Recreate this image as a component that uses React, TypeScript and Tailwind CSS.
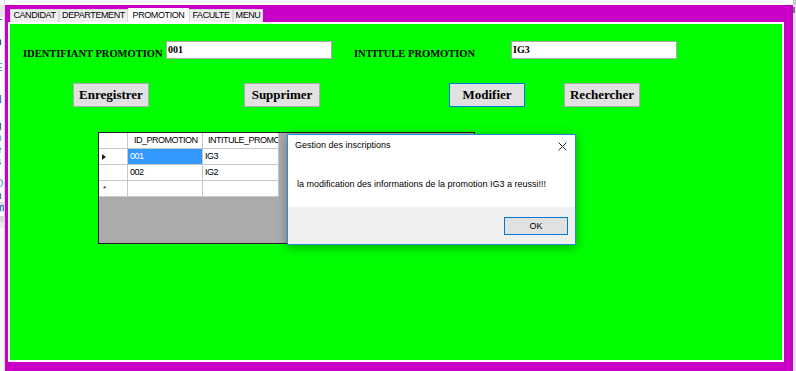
import React from "react";

const tabs = [
  { label: "CANDIDAT", w: "w-[49px]" },
  { label: "DEPARTEMENT", w: "w-[69px]" },
  { label: "PROMOTION", w: "w-[61px]", active: true },
  { label: "FACULTE", w: "w-[44px]" },
  { label: "MENU", w: "w-[30px]" },
];

const rows = [
  { id: "001", name: "IG3", current: true },
  { id: "002", name: "IG2" },
  { id: "", name: "", isNew: true },
];

function BackWindow() {
  // what shows of the window behind, on the left edge
  return (
    <div className="w-[5px] h-full overflow-hidden bg-white flex flex-col font-['Liberation_Sans',sans-serif] text-[10px] leading-[12px] border-r border-[#dcdcdc]">
      <div className="h-[5px] bg-white" />
      <div className="h-[12px] bg-[#e6e6e6]" />
      <div className="h-[14px] -ml-[4px] mt-[1px] text-[#333]">T</div>
      <div className="h-[26px] -ml-[4px] mt-[4px] text-black">n</div>
      <div className="h-[32px] -ml-[4px] text-[#3a8fd8]">E</div>
      <div className="h-[26px] -ml-[4px] text-[#1f4fc0]">d</div>
      <div className="h-[12px] -ml-[4px] text-[#333]">g</div>
      <div className="h-[12px] -ml-[4px] text-[#3a8fd8]">n</div>
      <div className="h-[12px] -ml-[4px] text-[#3a8fd8]">e</div>
      <div className="h-[22px] -ml-[4px] text-[#333]">s</div>
      <div className="h-[12px] -ml-[4px] text-[#3a8fd8]">D</div>
      <div className="h-[12px] -ml-[4px] text-[#333]">n</div>
      <div className="h-[10px] -ml-[4px] bg-[#e0e0e0] text-[#1f4fc0]">m</div>
      <div className="h-[4px] bg-white" />
      <div className="h-[6px] bg-[#d8d8d8]" />
      <div className="h-[6px] bg-[#ececec]" />
      <div className="flex-1 bg-[#f7f7f7]" />
    </div>
  );
}

function Field({ label, value, labelW }: { label: string; value: string; labelW: string }) {
  return (
    <div className="flex items-start">
      <div className={`${labelW} pt-[7px] text-[10.5px] leading-[12px] font-bold text-black`}>{label}</div>
      <div className="w-[166px] h-[18px] bg-white border border-[#a9a9a9] pl-[1px] pt-[2px] text-[10px] leading-[12px] font-bold text-black">
        {value}
      </div>
    </div>
  );
}

function Btn({ children, className, focused }: { children: React.ReactNode; className: string; focused?: boolean }) {
  return (
    <button
      className={`${className} h-[24px] w-[76px] bg-[#e1e1e1] border ${
        focused ? "border-[#0078d7]" : "border-[#adadad]"
      } text-[13px] font-bold text-black font-['Liberation_Serif',serif]`}
    >
      {children}
    </button>
  );
}

function Grid() {
  return (
    <div className="ml-[88px] mt-[25px] w-[377px] h-[112px] border border-[#1e1e1e] bg-[#ababab] font-['Liberation_Sans',sans-serif] text-[9px] tracking-[-0.5px] text-black">
      <div className="flex h-[16px]">
        <div className="w-[29px] bg-white border-r border-b border-[#c8c8c8]" />
        <div className="w-[75px] bg-white border-r border-b border-[#c8c8c8] pl-[6px] leading-[15px]">ID_PROMOTION</div>
        <div className="w-[76px] bg-white border-r border-b border-[#c8c8c8] pl-[5px] leading-[15px] overflow-hidden whitespace-nowrap">
          INTITULE_PROMOTION
        </div>
      </div>
      {rows.map((r, i) => (
        <div key={i} className="flex h-[16px]">
          <div className="w-[29px] bg-white border-r border-b border-[#c8c8c8] flex items-center pl-[3px]">
            {r.current && (
              <svg width="4" height="6" viewBox="0 0 4 6">
                <path d="M0 0 L4 3 L0 6 Z" fill="#222" />
              </svg>
            )}
            {r.isNew && <span className="pl-[1px] text-[8px] leading-none">*</span>}
          </div>
          <div
            className={`w-[75px] border-r border-b border-[#c8c8c8] pl-[2px] leading-[15px] ${
              r.current ? "bg-[#3399ff] text-white" : "bg-white"
            }`}
          >
            {r.id}
          </div>
          <div className="w-[76px] bg-white border-r border-b border-[#c8c8c8] pl-[2px] leading-[15px]">{r.name}</div>
        </div>
      ))}
    </div>
  );
}

function MessageBox() {
  return (
    <div className="absolute left-[287px] top-[134px] w-[289px] h-[111px] bg-white border border-[#2b8ad6] shadow-[0_2px_10px_rgba(0,0,0,0.35)] flex flex-col font-['Liberation_Sans',sans-serif] text-black">
      <div className="flex items-center justify-between h-[22px] pl-[7px] pr-[8px] text-[9px]">
        <span>Gestion des inscriptions</span>
        <svg width="9" height="9" viewBox="0 0 9 9">
          <path d="M0.5 0.5 L8.5 8.5 M8.5 0.5 L0.5 8.5" stroke="#333" strokeWidth="1" />
        </svg>
      </div>
      <div className="flex-1 pl-[9px] pt-[21px] text-[9px] leading-[12px]">
        la modification des informations de la promotion IG3 a reussi!!!
      </div>
      <div className="h-[37px] bg-[#f0f0f0] flex justify-end pr-[7px] pt-[10px]">
        <button className="w-[64px] h-[18px] bg-[#e1e1e1] border border-[#0078d7] text-[9px] leading-[16px] text-black">
          OK
        </button>
      </div>
    </div>
  );
}

export default function App() {
  return (
    <div className="relative w-[796px] h-[371px] overflow-hidden bg-white flex">
      <BackWindow />

      <div className="w-[788px] h-full flex flex-col">
        <div className="h-[5px] bg-white" />
        <div className="flex-1 bg-[#c800c8] pl-[3px] pt-[2px]">
          <div className="w-[776px] flex flex-col">
            <div className="flex items-end h-[15px] pl-[2px] font-['Liberation_Sans',sans-serif] text-[9px] tracking-[-0.4px] text-black">
              {tabs.map((t) => (
                <div
                  key={t.label}
                  className={`${t.w} flex items-center justify-center border border-b-0 ${
                    t.active
                      ? "h-[15px] bg-white border-white -mb-[1px] relative z-10"
                      : "h-[13px] bg-[#f0f0f0] border-[#d9d9d9]"
                  }`}
                >
                  {t.label}
                </div>
              ))}
            </div>

            <div className="h-[340px] border-2 border-white bg-[#00ff00] flex flex-col font-['Liberation_Serif',serif]">
              <div className="flex pt-[17px] pl-[13px]">
                <Field label="IDENTIFIANT PROMOTION" value="001" labelW="w-[143px]" />
                <div className="ml-[22px]">
                  <Field label="INTITULE PROMOTION" value="IG3" labelW="w-[157px]" />
                </div>
              </div>

              <div className="flex mt-[23px] pl-[63px]">
                <Btn className="">Enregistrer</Btn>
                <Btn className="ml-[95px]">Supprimer</Btn>
                <Btn className="ml-[129px]" focused>
                  Modifier
                </Btn>
                <Btn className="ml-[39px]">Rechercher</Btn>
              </div>

              <Grid />
            </div>
          </div>
        </div>
      </div>

      <div className="w-[3px] h-full bg-[#e4e4e4] flex flex-col">
        <div className="h-[5px] bg-[#d0d0d0]" />
        <div className="h-[6px] mt-[2px] w-[2px] bg-[#777]" />
      </div>

      <MessageBox />
    </div>
  );
}
